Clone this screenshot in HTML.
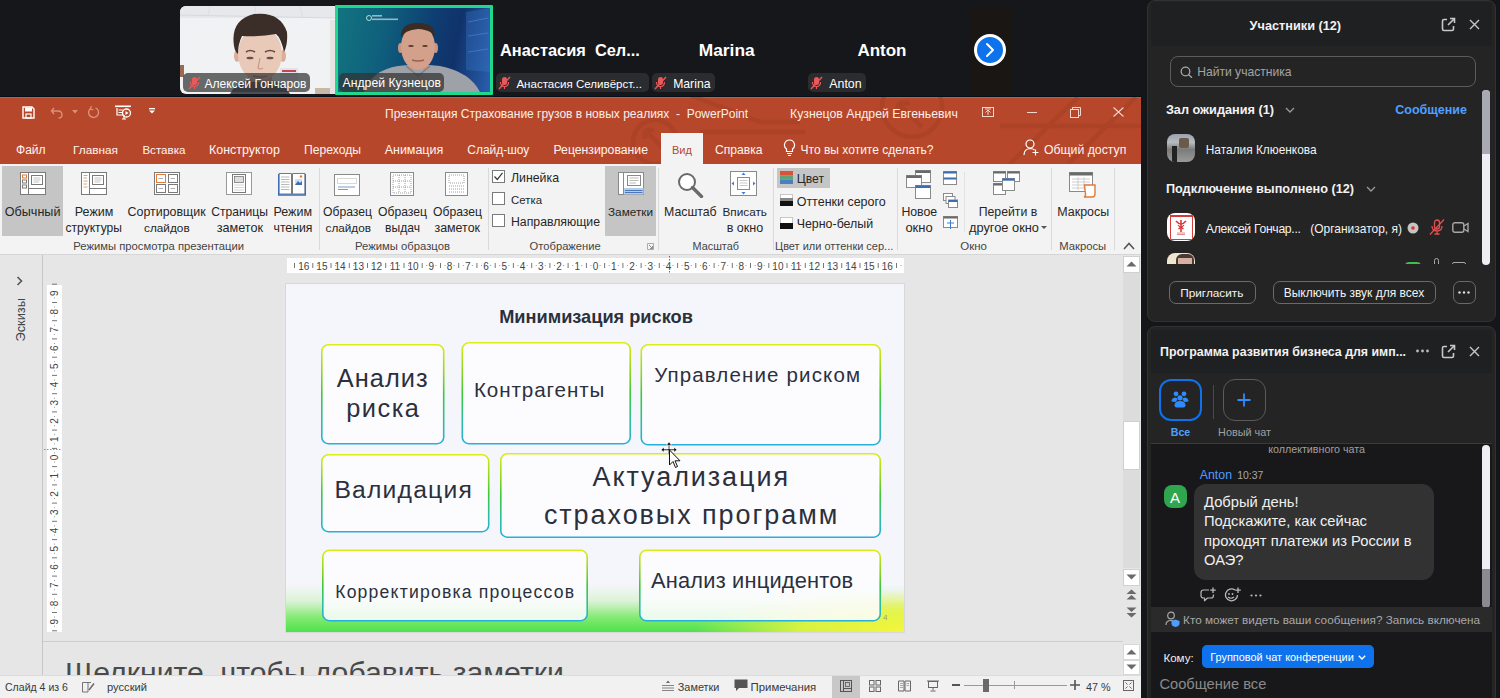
<!DOCTYPE html>
<html><head><meta charset="utf-8">
<style>
*{margin:0;padding:0;box-sizing:border-box}
body{width:1500px;height:698px;overflow:hidden;background:#15161a;font-family:"Liberation Sans",sans-serif;position:relative}
.a{position:absolute}
.w{white-space:nowrap}
</style></head><body>
<!-- ============ TOP VIDEO BAR ============ -->
<div class="a" style="left:0;top:0;width:1141px;height:97px;background:#16171b"></div>
<!-- video 1 -->
<div class="a" style="left:180px;top:6px;width:155px;height:88px;border-radius:6px 0 0 6px;overflow:hidden;background:#f1f2f4">
  <svg class="a" style="left:0;top:0" width="155" height="88" viewBox="0 0 155 88">
    <rect x="0" y="0" width="155" height="12" fill="#e6e8ec"/>
    <line x1="0" y1="9" x2="155" y2="12" stroke="#cfd3d8" stroke-width="0.7"/>
    <line x1="30" y1="0" x2="28" y2="10" stroke="#d6d9dd" stroke-width="0.6"/>
    <line x1="75" y1="0" x2="76" y2="11" stroke="#d6d9dd" stroke-width="0.6"/>
    <line x1="120" y1="0" x2="123" y2="12" stroke="#d6d9dd" stroke-width="0.6"/>
    <rect x="150" y="14" width="5" height="74" fill="#e9e4e4"/>
    <rect x="0" y="59" width="4" height="12" fill="#9a6a55"/>
    <rect x="100" y="62" width="18" height="14" fill="#dfe3ee"/>
    <rect x="102" y="64" width="14" height="2" fill="#c44"/>
    <rect x="135" y="82" width="15" height="6" fill="#c9b8a8"/>
    <!-- neck/shirt -->
    <path d="M50 88 Q56 76 70 74 L90 74 Q104 76 110 88 Z" fill="#4a4f5c"/>
    <rect x="68" y="62" width="24" height="14" fill="#d9b09c"/>
    <!-- face -->
    <ellipse cx="57" cy="50" rx="3" ry="6" fill="#dcae98"/>
    <ellipse cx="103" cy="50" rx="3" ry="6" fill="#dcae98"/>
    <ellipse cx="80" cy="48" rx="22" ry="27" fill="#e9c9b7"/>
    <!-- hair -->
    <path d="M54 40 Q50 14 74 8 Q100 5 107 26 Q108 38 104 46 Q101 32 96 28 Q80 31 62 30 Q58 38 58 48 Q55 46 54 40 Z" fill="#3b2e28"/>
    <path d="M66 46 Q70 43 75 46 M85 46 Q90 43 95 46" stroke="#6b4a3e" stroke-width="1.6" fill="none"/>
    <ellipse cx="70" cy="52" rx="3.5" ry="1.3" fill="#6b5048"/>
    <ellipse cx="90" cy="52" rx="3.5" ry="1.3" fill="#6b5048"/>
    <path d="M80 52 L78 62 Q80 64 83 62" stroke="#c99a86" stroke-width="1.2" fill="none"/>
    <path d="M73 70 Q80 72 87 70" stroke="#b88070" stroke-width="1.4" fill="none"/>
  </svg>
  <div class="a" style="left:3px;top:67px;width:127px;height:19px;border-radius:5px;background:rgba(50,50,50,.72)"></div>
  <svg class="a" style="left:8px;top:70px" width="13" height="14" viewBox="0 0 13 14"><rect x="4" y="1" width="5" height="8" rx="2.5" fill="#e85a5a"/><path d="M2.5 6 Q2.5 10.5 6.5 10.5 Q10.5 10.5 10.5 6" stroke="#e85a5a" stroke-width="1.2" fill="none"/><line x1="6.5" y1="10.5" x2="6.5" y2="13" stroke="#e85a5a" stroke-width="1.2"/><line x1="1" y1="13" x2="12" y2="1" stroke="#e85a5a" stroke-width="1.4"/></svg>
  </div>
<!-- video 2 -->
<div class="a" style="left:335px;top:5px;width:158px;height:90px;background:#1ed88e;border-radius:1px"></div>
<div class="a" style="left:338px;top:8px;width:152px;height:84px;overflow:hidden;background:linear-gradient(100deg,#127480 0%,#0f5f7c 30%,#0e3f72 58%,#10326a 75%,#2a5fb0 100%)">
  <svg class="a" style="left:0;top:0" width="152" height="84" viewBox="0 0 152 84">
    <circle cx="31" cy="10" r="2.5" fill="none" stroke="#cfe" stroke-width="0.8"/>
    <rect x="34" y="7" width="10" height="1.6" fill="#bcd" opacity=".8"/>
    <rect x="34" y="10.5" width="26" height="1.6" fill="#bcd" opacity=".8"/>
    <path d="M128 4 L152 0 L152 64 L128 62 Z" fill="#3a78c8" opacity=".35"/>
    <path d="M130 14 L150 10 M130 28 L150 25 M130 44 L150 41" stroke="#6aa0e0" stroke-width="1" opacity=".4"/>
    <path d="M26 84 Q34 62 60 58 Q80 55 102 58 Q132 64 142 84 Z" fill="#9fa1a8"/>
    <path d="M68 58 L80 68 L92 58" fill="none" stroke="#7f8188" stroke-width="1.5"/>
    <rect x="71" y="50" width="18" height="11" fill="#b8887a"/>
    <ellipse cx="62.5" cy="40" rx="2.5" ry="5" fill="#c99583"/>
    <ellipse cx="97.5" cy="40" rx="2.5" ry="5" fill="#c99583"/>
    <ellipse cx="80" cy="39" rx="17" ry="23" fill="#d3a08c"/>
    <path d="M63 30 Q62 15 80 15 Q98 15 97 30 Q95 22 80 21 Q66 22 63 30 Z" fill="#3a2b24"/>
    <ellipse cx="73" cy="38" rx="2.8" ry="1.1" fill="#5a3a30"/>
    <ellipse cx="87" cy="38" rx="2.8" ry="1.1" fill="#5a3a30"/>
    <path d="M74 52 Q80 54 86 52" stroke="#9a6050" stroke-width="1.5" fill="none"/>
  </svg>
  <div class="a" style="left:1px;top:65px;width:105px;height:19px;border-radius:5px;background:rgba(50,50,50,.72)"></div>
  </div>
<!-- name tiles -->
<div class="a" style="left:496px;top:73px;width:153px;height:19px;border-radius:5px;background:#2b2c2f"></div>
<div class="a" style="left:652px;top:73px;width:63px;height:19px;border-radius:5px;background:#2b2c2f"></div>
<div class="a" style="left:808px;top:73px;width:58px;height:19px;border-radius:5px;background:#2b2c2f"></div>
<svg class="a" style="left:498px;top:76px" width="13" height="14" viewBox="0 0 13 14"><rect x="4" y="1" width="5" height="8" rx="2.5" fill="#e85a5a"/><path d="M2.5 6 Q2.5 10.5 6.5 10.5 Q10.5 10.5 10.5 6" stroke="#e85a5a" stroke-width="1.2" fill="none"/><line x1="6.5" y1="10.5" x2="6.5" y2="13" stroke="#e85a5a" stroke-width="1.2"/><line x1="1" y1="13" x2="12" y2="1" stroke="#e85a5a" stroke-width="1.4"/></svg>
<svg class="a" style="left:654px;top:76px" width="13" height="14" viewBox="0 0 13 14"><rect x="4" y="1" width="5" height="8" rx="2.5" fill="#e85a5a"/><path d="M2.5 6 Q2.5 10.5 6.5 10.5 Q10.5 10.5 10.5 6" stroke="#e85a5a" stroke-width="1.2" fill="none"/><line x1="6.5" y1="10.5" x2="6.5" y2="13" stroke="#e85a5a" stroke-width="1.2"/><line x1="1" y1="13" x2="12" y2="1" stroke="#e85a5a" stroke-width="1.4"/></svg>
<svg class="a" style="left:810px;top:76px" width="13" height="14" viewBox="0 0 13 14"><rect x="4" y="1" width="5" height="8" rx="2.5" fill="#e85a5a"/><path d="M2.5 6 Q2.5 10.5 6.5 10.5 Q10.5 10.5 10.5 6" stroke="#e85a5a" stroke-width="1.2" fill="none"/><line x1="6.5" y1="10.5" x2="6.5" y2="13" stroke="#e85a5a" stroke-width="1.2"/><line x1="1" y1="13" x2="12" y2="1" stroke="#e85a5a" stroke-width="1.4"/></svg>
<div class="a" style="left:969px;top:8px;width:43px;height:87px;background:#1a1614"></div>
<div class="a" style="left:974px;top:34px;width:32px;height:32px;border-radius:50%;background:#0e72ed;border:3px solid #fff"></div>
<svg class="a" style="left:983px;top:42px" width="14" height="16" viewBox="0 0 14 16"><path d="M4 2 L10 8 L4 14" stroke="#fff" stroke-width="2" fill="none" stroke-linecap="round" stroke-linejoin="round"/></svg>


<div class="a w" style="left:204.4px;top:74.7px;font-size:12.07px;line-height:18px;color:#ffffff">Алексей Гончаров</div>
<div class="a w" style="left:342.6px;top:74.4px;font-size:12.22px;line-height:18px;color:#ffffff">Андрей Кузнецов</div>
<div class="a w" style="left:500.0px;top:38.0px;font-size:16.39px;line-height:24px;color:#ffffff;font-weight:bold;white-space:pre">Анастасия  Сел...</div>
<div class="a w" style="left:698.8px;top:38.0px;font-size:17.34px;line-height:25px;color:#ffffff;font-weight:bold">Marina</div>
<div class="a w" style="left:857.4px;top:38.0px;font-size:17.00px;line-height:25px;color:#ffffff;font-weight:bold">Anton</div>
<div class="a w" style="left:516.4px;top:74.6px;font-size:11.56px;line-height:18px;color:#ffffff">Анастасия Селивёрст...</div>
<div class="a w" style="left:673.2px;top:74.6px;font-size:12.20px;line-height:18px;color:#ffffff">Marina</div>
<div class="a w" style="left:829.3px;top:74.6px;font-size:12.36px;line-height:19px;color:#ffffff">Anton</div>
<!-- ============ POWERPOINT ============ -->
<div class="a" style="left:0px;top:97px;width:1141px;height:67px;background:#b7472a"></div>
<div class="a" style="left:0px;top:96px;width:1141px;height:1px;background:#03101a"></div>
<div class="a" style="left:0px;top:97px;width:1141px;height:1px;background:#dc5434"></div>
<svg class="a" style="left:0px;top:97px" width="1141" height="67" viewBox="0 0 1141 67">
<g stroke="#a63f25" stroke-width="4.5" fill="none" opacity="0.6">
<circle cx="912" cy="10" r="30"/>
<path d="M922 30 L898 6 M898 6 V18 M898 6 H910"/>
<circle cx="655" cy="45" r="22"/>
<path d="M668 56 L645 33 M645 33 V42 M645 33 H654"/>
<path d="M700 35 H805"/>
<path d="M690 -2 L760 25 L800 25"/>
<path d="M1000 29 H1141"/>
<path d="M1010 67 L1078 0 M1068 67 L1136 0"/>
</g></svg>
<svg class="a" style="left:22px;top:106px" width="13" height="13" viewBox="0 0 13 13"><path d="M1 1 H10 L12 3 V12 H1 Z" fill="none" stroke="#fff" stroke-width="1.4"/><rect x="3" y="1.5" width="7" height="4" fill="#fff"/><rect x="4" y="8" width="5" height="4" fill="none" stroke="#fff" stroke-width="1.2"/></svg>
<svg class="a" style="left:50px;top:106px" width="14" height="13" viewBox="0 0 14 13"><path d="M4 2 L1.5 5 L4 8 M1.5 5 H8 Q12 5 12 9 Q12 12 8.5 12" fill="none" stroke="#d9917c" stroke-width="1.4"/></svg>
<svg class="a" style="left:72px;top:110px" width="6" height="4" viewBox="0 0 6 4"><path d="M0 0 H6 L3 3.5 Z" fill="#d9917c"/></svg>
<svg class="a" style="left:87px;top:106px" width="13" height="13" viewBox="0 0 13 13"><path d="M8.5 1.8 A5 5 0 1 1 3.5 2.5" fill="none" stroke="#d9917c" stroke-width="1.4"/><path d="M4.5 0 L3.3 3 L6.5 4" fill="none" stroke="#d9917c" stroke-width="1.3"/></svg>
<svg class="a" style="left:115px;top:105px" width="17" height="15" viewBox="0 0 17 15"><rect x="0" y="0.5" width="16" height="1.6" fill="#fff"/><path d="M2 3 V10 H9" fill="none" stroke="#fff" stroke-width="1.2"/><path d="M3.5 5 H8 M3.5 7.5 H7" stroke="#fff" stroke-width="1"/><circle cx="11.5" cy="8" r="4" fill="none" stroke="#fff" stroke-width="1.3"/><path d="M10.5 6 L13.5 8 L10.5 10Z" fill="#fff"/><path d="M7 14 H11 M9 10 V14" stroke="#fff" stroke-width="1.2"/></svg>
<svg class="a" style="left:149px;top:108px" width="6" height="6" viewBox="0 0 6 6"><rect x="0" y="0" width="6" height="1.3" fill="#fff"/><path d="M0 2.5 H6 L3 5.5Z" fill="#fff"/></svg>
<div class="a w" style="left:385.0px;top:105.0px;font-size:12.00px;line-height:18px;color:#fbeee9;white-space:pre">Презентация Страхование грузов в новых реалиях  -  PowerPoint</div>
<div class="a w" style="left:790.0px;top:105.0px;font-size:12.29px;line-height:18px;color:#fbeee9">Кузнецов Андрей Евгеньевич</div>
<svg class="a" style="left:982px;top:107px" width="12" height="10" viewBox="0 0 12 10"><rect x="0.5" y="0.5" width="11" height="9" fill="none" stroke="#f3d6cd" stroke-width="1"/><path d="M3.5 5.5 L6 3 L8.5 5.5 M6 3 V8 M3 2 H9" fill="none" stroke="#f3d6cd" stroke-width="1"/></svg>
<div class="a" style="left:1027px;top:112px;width:10px;height:1px;background:#f3d6cd"></div>
<svg class="a" style="left:1070px;top:107px" width="11" height="11" viewBox="0 0 11 11"><rect x="0.5" y="2.5" width="8" height="8" fill="none" stroke="#f3d6cd" stroke-width="1"/><path d="M2.5 2.5 V0.5 H10.5 V8.5 H8.5" fill="none" stroke="#f3d6cd" stroke-width="1"/></svg>
<svg class="a" style="left:1113px;top:107px" width="11" height="10" viewBox="0 0 11 10"><path d="M0.5 0.5 L10.5 9.5 M10.5 0.5 L0.5 9.5" stroke="#f3d6cd" stroke-width="1.1"/></svg>
<div class="a w" style="left:16.0px;top:141.0px;font-size:12.04px;line-height:18px;color:#fff4f0">Файл</div>
<div class="a w" style="left:73.0px;top:141.0px;font-size:11.82px;line-height:18px;color:#fff4f0">Главная</div>
<div class="a w" style="left:142.4px;top:141.0px;font-size:11.60px;line-height:18px;color:#fff4f0">Вставка</div>
<div class="a w" style="left:209.0px;top:141.0px;font-size:12.45px;line-height:19px;color:#fff4f0">Конструктор</div>
<div class="a w" style="left:304.0px;top:141.0px;font-size:12.15px;line-height:18px;color:#fff4f0">Переходы</div>
<div class="a w" style="left:384.7px;top:141.0px;font-size:12.48px;line-height:19px;color:#fff4f0">Анимация</div>
<div class="a w" style="left:467.3px;top:141.0px;font-size:11.94px;line-height:18px;color:#fff4f0">Слайд-шоу</div>
<div class="a w" style="left:553.5px;top:141.0px;font-size:12.24px;line-height:18px;color:#fff4f0">Рецензирование</div>
<div class="a w" style="left:715.0px;top:141.0px;font-size:12.11px;line-height:18px;color:#fff4f0">Справка</div>
<div class="a" style="left:661px;top:133px;width:42px;height:31px;background:#f3f3f3"></div>
<div class="a w" style="left:672.0px;top:142.0px;font-size:11.05px;line-height:17px;color:#b7472a">Вид</div>
<svg class="a" style="left:783px;top:139px" width="13" height="18" viewBox="0 0 13 18"><path d="M6.5 1 A5 5 0 0 0 3.5 10 V12.5 H9.5 V10 A5 5 0 0 0 6.5 1Z" fill="none" stroke="#fff" stroke-width="1.2"/><path d="M4 14.5 H9 M5 16.5 H8" stroke="#fff" stroke-width="1.2"/></svg>
<div class="a w" style="left:800.6px;top:141.0px;font-size:12.02px;line-height:18px;color:#fff4f0">Что вы хотите сделать?</div>
<svg class="a" style="left:1023px;top:139px" width="16" height="17" viewBox="0 0 16 17"><circle cx="7" cy="5" r="4" fill="none" stroke="#fff" stroke-width="1.2"/><path d="M1 16 Q1 10 7 9.5 Q10 9.5 11.5 11" fill="none" stroke="#fff" stroke-width="1.2"/><path d="M12.5 10.5 V16.5 M9.5 13.5 H15.5" stroke="#fff" stroke-width="1.2"/></svg>
<div class="a w" style="left:1044.0px;top:141.0px;font-size:12.25px;line-height:18px;color:#fff4f0">Общий доступ</div>
<div class="a" style="left:0px;top:164px;width:1141px;height:90px;background:#f3f3f3"></div>
<div class="a" style="left:0px;top:254px;width:1141px;height:1px;background:#d6d6d6"></div>
<div class="a" style="left:2px;top:166px;width:61px;height:70px;background:#c5c5c5"></div>
<div class="a" style="left:605px;top:166px;width:51px;height:70px;background:#c5c5c5"></div>
<div class="a" style="left:777px;top:168px;width:53px;height:20px;background:#c5c5c5"></div>
<div class="a" style="left:319px;top:168px;width:1px;height:82px;background:#dadada"></div>
<div class="a" style="left:488px;top:168px;width:1px;height:82px;background:#dadada"></div>
<div class="a" style="left:658px;top:168px;width:1px;height:82px;background:#dadada"></div>
<div class="a" style="left:773px;top:168px;width:1px;height:82px;background:#dadada"></div>
<div class="a" style="left:897px;top:168px;width:1px;height:82px;background:#dadada"></div>
<div class="a" style="left:1051px;top:168px;width:1px;height:82px;background:#dadada"></div>
<div class="a" style="left:1114px;top:168px;width:1px;height:82px;background:#dadada"></div>
<div class="a" style="left:964px;top:172px;width:1px;height:60px;background:#e2e2e2"></div>
<svg class="a" style="left:20px;top:172px" width="26" height="24" viewBox="0 0 26 24"><rect x="0.5" y="0.5" width="25" height="22" fill="#ffffff" stroke="#7a7a7a" stroke-width="1"/><path d="M8.5 0.5 V22.5 M8.5 16.5 H25.5" stroke="#7a7a7a" stroke-width="1"/><rect x="2.5" y="3" width="4" height="3" fill="none" stroke="#e07b39" stroke-width="1"/><rect x="2.5" y="8" width="4" height="3" fill="none" stroke="#7a7a7a" stroke-width="1"/><rect x="2.5" y="13" width="4" height="3" fill="none" stroke="#7a7a7a" stroke-width="1"/><rect x="11.5" y="3.5" width="11" height="9" fill="none" stroke="#7a7a7a" stroke-width="1"/><path d="M13.5 6 H20.5 M13.5 8 H20.5 M13.5 10 H19" stroke="#b5b5b5" stroke-width="0.8"/></svg>
<svg class="a" style="left:81px;top:172px" width="26" height="24" viewBox="0 0 26 24"><rect x="0.5" y="0.5" width="25" height="22" fill="#ffffff" stroke="#7a7a7a" stroke-width="1"/><path d="M8.5 0.5 V22.5 M8.5 16.5 H25.5" stroke="#7a7a7a" stroke-width="1"/><path d="M2.5 3.5 H6.5 M2.5 6 H6 M2.5 9 H6.5 M2.5 12 H6 M2.5 15 H6.5" stroke="#c7a88f" stroke-width="1"/><rect x="11.5" y="3.5" width="11" height="9" fill="none" stroke="#7a7a7a" stroke-width="1"/><path d="M13.5 6 H20.5 M13.5 8 H20.5 M13.5 10 H19" stroke="#b5b5b5" stroke-width="0.8"/></svg>
<svg class="a" style="left:154px;top:172px" width="26" height="24" viewBox="0 0 26 24"><rect x="0.5" y="0.5" width="25" height="22" fill="#ffffff" stroke="#7a7a7a" stroke-width="1"/><rect x="2.5" y="2.5" width="9" height="8" fill="none" stroke="#e07b39" stroke-width="1"/><rect x="14.5" y="2.5" width="9" height="8" fill="none" stroke="#7a7a7a" stroke-width="1"/><rect x="2.5" y="12.5" width="9" height="8" fill="none" stroke="#7a7a7a" stroke-width="1"/><rect x="14.5" y="12.5" width="9" height="8" fill="none" stroke="#7a7a7a" stroke-width="1"/><path d="M4.5 6.5 H9 M16.5 6.5 H21 M4.5 16.5 H9 M16.5 16.5 H21" stroke="#999" stroke-width="0.8"/></svg>
<svg class="a" style="left:226px;top:172px" width="26" height="24" viewBox="0 0 26 24"><rect x="0.5" y="0.5" width="25" height="22" fill="#ffffff" stroke="#9a9a9a" stroke-width="1"/><rect x="6.5" y="2.5" width="13" height="18" fill="none" stroke="#7a7a7a" stroke-width="1"/><rect x="8.5" y="4.5" width="9" height="6" fill="#dedede" stroke="#7a7a7a" stroke-width="0.8"/><path d="M8.5 13 H17.5 M8.5 15.5 H17.5 M8.5 18 H17.5" stroke="#999" stroke-dasharray="1 1" stroke-width="0.8"/></svg>
<svg class="a" style="left:278px;top:172px" width="28" height="24" viewBox="0 0 28 24"><path d="M1 1.5 H13.5 V22 H1 Z M14.5 1.5 H27 V22 H14.5Z" fill="#ffffff" stroke="#7a7a7a" stroke-width="1"/><path d="M0.5 2 V23 H27.5 V2" fill="none" stroke="#3e6db5" stroke-width="1.6"/><path d="M3 5 H11.5 M3 7.5 H11.5 M3 10 H11.5 M3 12.5 H11.5 M3 15 H11.5 M3 17.5 H11.5" stroke="#aaa" stroke-width="0.8"/><rect x="17" y="7" width="7" height="6" fill="#cfe0f3"/><path d="M17 13 L20 9 L22 11 L24 9 V13Z" fill="#3e6db5"/><circle cx="23" cy="4.5" r="1.2" fill="#e07b39"/></svg>
<div class="a w" style="left:4.8px;top:203.0px;font-size:12.60px;line-height:19px;color:#262626">Обычный</div>
<div class="a w" style="left:74.8px;top:203.0px;font-size:12.49px;line-height:19px;color:#262626">Режим</div>
<div class="a w" style="left:65.6px;top:219.0px;font-size:12.04px;line-height:18px;color:#262626">структуры</div>
<div class="a w" style="left:127.6px;top:203.0px;font-size:12.41px;line-height:19px;color:#262626">Сортировщик</div>
<div class="a w" style="left:144.0px;top:219.0px;font-size:11.81px;line-height:18px;color:#262626">слайдов</div>
<div class="a w" style="left:211.2px;top:203.0px;font-size:12.10px;line-height:18px;color:#262626">Страницы</div>
<div class="a w" style="left:216.7px;top:219.0px;font-size:12.63px;line-height:19px;color:#262626">заметок</div>
<div class="a w" style="left:273.5px;top:203.0px;font-size:12.49px;line-height:19px;color:#262626">Режим</div>
<div class="a w" style="left:273.5px;top:219.0px;font-size:12.25px;line-height:18px;color:#262626">чтения</div>
<div class="a w" style="left:73.3px;top:238.0px;font-size:11.26px;line-height:17px;color:#444444">Режимы просмотра презентации</div>
<svg class="a" style="left:334px;top:174px" width="27" height="23" viewBox="0 0 27 23"><rect x="0.5" y="0.5" width="25" height="21" fill="#ffffff" stroke="#8a8a8a" stroke-width="1"/><rect x="3.5" y="4.5" width="19" height="5" fill="none" stroke="#999" stroke-dasharray="1 1" stroke-width="0.8"/><path d="M4 13 H21 M4 15.5 H14" stroke="#6a8fc9" stroke-width="0.9"/></svg>
<svg class="a" style="left:390px;top:172px" width="25" height="25" viewBox="0 0 25 25"><rect x="0.5" y="0.5" width="23" height="23" fill="#ffffff" stroke="#8a8a8a" stroke-width="1"/><path d="M3 3 H21 V21 H3Z M3 9 H21 M3 15 H21 M9 3 V21 M15 3 V21" fill="none" stroke="#888" stroke-dasharray="1 1" stroke-width="0.8"/></svg>
<svg class="a" style="left:445px;top:172px" width="24" height="25" viewBox="0 0 24 25"><rect x="0.5" y="0.5" width="22" height="23" fill="#ffffff" stroke="#8a8a8a" stroke-width="1"/><rect x="4" y="3" width="15" height="8" fill="none" stroke="#888" stroke-dasharray="1 1" stroke-width="0.8"/><path d="M4 14 H19 M4 17 H19 M4 20 H19" stroke="#888" stroke-dasharray="1 1" stroke-width="0.8"/></svg>
<div class="a w" style="left:323.0px;top:203.0px;font-size:12.17px;line-height:18px;color:#262626">Образец</div>
<div class="a w" style="left:325.5px;top:219.0px;font-size:11.76px;line-height:18px;color:#262626">слайдов</div>
<div class="a w" style="left:378.0px;top:203.0px;font-size:12.17px;line-height:18px;color:#262626">Образец</div>
<div class="a w" style="left:385.0px;top:219.0px;font-size:12.12px;line-height:18px;color:#262626">выдач</div>
<div class="a w" style="left:433.0px;top:203.0px;font-size:12.17px;line-height:18px;color:#262626">Образец</div>
<div class="a w" style="left:434.5px;top:219.0px;font-size:12.41px;line-height:19px;color:#262626">заметок</div>
<div class="a w" style="left:355.0px;top:238.0px;font-size:11.29px;line-height:17px;color:#444444">Режимы образцов</div>
<div class="a" style="left:492px;top:170px;width:13px;height:13px;background:#ffffff;border:1px solid #7a7a7a"></div>
<div class="a" style="left:492px;top:192px;width:13px;height:13px;background:#ffffff;border:1px solid #7a7a7a"></div>
<div class="a" style="left:492px;top:214px;width:13px;height:13px;background:#ffffff;border:1px solid #7a7a7a"></div>
<svg class="a" style="left:494px;top:172px" width="9" height="9" viewBox="0 0 9 9"><path d="M0.5 4.5 L3.3 7.5 L8.5 0.8" fill="none" stroke="#333" stroke-width="1.2"/></svg>
<div class="a w" style="left:511.0px;top:169.0px;font-size:12.32px;line-height:19px;color:#262626">Линейка</div>
<div class="a w" style="left:511.0px;top:192.0px;font-size:11.40px;line-height:17px;color:#262626">Сетка</div>
<div class="a w" style="left:511.0px;top:213.0px;font-size:12.27px;line-height:18px;color:#262626">Направляющие</div>
<svg class="a" style="left:618px;top:172px" width="26" height="23" viewBox="0 0 26 23"><rect x="0.5" y="0.5" width="25" height="22" fill="#ffffff" stroke="#8a8a8a" stroke-width="1"/><path d="M5.5 0.5 V22.5" stroke="#8a8a8a" stroke-width="1"/><rect x="9.5" y="3.5" width="13" height="10" fill="none" stroke="#8a8a8a" stroke-width="1"/><path d="M11.5 6 H20.5 M11.5 8.5 H20.5 M11.5 11 H18" stroke="#aaa" stroke-width="0.8"/><rect x="6" y="16" width="19.5" height="6.5" fill="#b7cce8"/><path d="M7 18.5 H24.5 M7 20.5 H24.5" stroke="#3e6db5" stroke-width="0.9"/></svg>
<div class="a w" style="left:608.0px;top:203.0px;font-size:11.77px;line-height:18px;color:#262626">Заметки</div>
<div class="a w" style="left:529.6px;top:238.0px;font-size:11.20px;line-height:17px;color:#444444">Отображение</div>
<svg class="a" style="left:647px;top:243px" width="7" height="7" viewBox="0 0 7 7"><path d="M0.5 0.5 H6.5 V6.5 H0.5Z" fill="none" stroke="#999" stroke-width="0.8"/><path d="M2 2 L5.5 5.5 M5.5 3 V5.5 H3" fill="none" stroke="#777" stroke-width="0.8"/></svg>
<svg class="a" style="left:677px;top:172px" width="27" height="26" viewBox="0 0 27 26"><circle cx="10" cy="10" r="8" fill="#fff" stroke="#6a6a6a" stroke-width="2"/><path d="M15.5 15.5 L24.5 24.5" stroke="#6a6a6a" stroke-width="3.4" stroke-linecap="round"/></svg>
<svg class="a" style="left:730px;top:171px" width="27" height="26" viewBox="0 0 27 26"><rect x="0.5" y="0.5" width="26" height="24" fill="#fff" stroke="#8a8a8a" stroke-width="1"/><rect x="7.5" y="6.5" width="12" height="12" fill="#fff" stroke="#8a8a8a" stroke-width="1"/><path d="M9.5 9.5 H17.5 M9.5 12 H17.5 M9.5 14.5 H17.5" stroke="#bbb" stroke-width="0.8"/><path d="M13.5 1.5 L11.5 4 H15.5Z M13.5 23.5 L11.5 21 H15.5Z M1.5 12.5 L4 10.5 V14.5Z M25.5 12.5 L23 10.5 V14.5Z" fill="#3e7bd0"/></svg>
<div class="a w" style="left:664.0px;top:203.0px;font-size:12.32px;line-height:19px;color:#262626">Масштаб</div>
<div class="a w" style="left:722.5px;top:203.0px;font-size:11.77px;line-height:18px;color:#262626">Вписать</div>
<div class="a w" style="left:726.7px;top:219.0px;font-size:12.57px;line-height:19px;color:#262626">в окно</div>
<div class="a w" style="left:692.5px;top:238.0px;font-size:10.87px;line-height:17px;color:#444444">Масштаб</div>
<svg class="a" style="left:780px;top:171px" width="13" height="13" viewBox="0 0 13 13"><rect x="0" y="0" width="13" height="4.3" fill="#d9533a"/><rect x="0" y="4.3" width="13" height="4.3" fill="#5fa27a"/><rect x="0" y="8.6" width="13" height="4.4" fill="#4a7fc0"/></svg>
<svg class="a" style="left:780px;top:194px" width="13" height="12" viewBox="0 0 13 12"><rect x="0.5" y="0.5" width="12" height="11" fill="#fff" stroke="#bbb" stroke-width="0.8"/><rect x="0" y="4" width="13" height="3" fill="#888"/><rect x="0" y="7" width="13" height="5" fill="#111"/></svg>
<svg class="a" style="left:780px;top:217px" width="13" height="12" viewBox="0 0 13 12"><rect x="0.5" y="0.5" width="12" height="11" fill="#fff" stroke="#bbb" stroke-width="0.8"/><rect x="0" y="6" width="13" height="6" fill="#111"/></svg>
<div class="a w" style="left:796.7px;top:170.0px;font-size:12.18px;line-height:18px;color:#262626">Цвет</div>
<div class="a w" style="left:796.7px;top:192.7px;font-size:12.49px;line-height:19px;color:#262626">Оттенки серого</div>
<div class="a w" style="left:796.7px;top:215.0px;font-size:12.42px;line-height:19px;color:#262626">Черно-белый</div>
<div class="a w" style="left:775.0px;top:238.0px;font-size:10.99px;line-height:17px;color:#444444">Цвет или оттенки сер...</div>
<svg class="a" style="left:906px;top:170px" width="26" height="29" viewBox="0 0 26 29"><rect x="9.5" y="0.5" width="15" height="12" fill="#fff" stroke="#8a8a8a" stroke-width="1"/><rect x="9.5" y="0.5" width="15" height="2.5" fill="#6a6a6a"/><rect x="0.5" y="5.5" width="15" height="12" fill="#fff" stroke="#8a8a8a" stroke-width="1"/><rect x="0.5" y="5.5" width="15" height="2.5" fill="#6a6a6a"/><rect x="9.5" y="15.5" width="15" height="13" fill="#fff" stroke="#8a8a8a" stroke-width="1"/><rect x="9.5" y="15.5" width="15" height="2.5" fill="#3e6db5"/></svg>
<svg class="a" style="left:943px;top:171px" width="14" height="14" viewBox="0 0 14 14"><rect x="0.5" y="0.5" width="13" height="13" fill="#fff" stroke="#8a8a8a" stroke-width="1"/><rect x="0.5" y="0.5" width="13" height="2" fill="#3e6db5"/><rect x="0.5" y="6.5" width="13" height="2" fill="#3e6db5"/></svg>
<svg class="a" style="left:943px;top:193px" width="15" height="15" viewBox="0 0 15 15"><rect x="0.5" y="0.5" width="9" height="7" fill="#fff" stroke="#8a8a8a" stroke-width="1"/><rect x="3" y="3.5" width="9" height="7" fill="#fff" stroke="#8a8a8a" stroke-width="1"/><rect x="5.5" y="7" width="9" height="7.5" fill="#fff" stroke="#8a8a8a" stroke-width="1"/><rect x="5.5" y="7" width="9" height="2" fill="#3e6db5"/></svg>
<svg class="a" style="left:943px;top:216px" width="15" height="14" viewBox="0 0 15 14"><rect x="0.5" y="0.5" width="14" height="11" fill="#fff" stroke="#8a8a8a" stroke-width="1"/><rect x="0.5" y="0.5" width="14" height="2" fill="#6a6a6a"/><path d="M4 7 H11 M7.5 4 V13" stroke="#3e7bd0" stroke-width="1"/></svg>
<div class="a w" style="left:901.4px;top:203.0px;font-size:12.30px;line-height:18px;color:#262626">Новое</div>
<div class="a w" style="left:905.4px;top:218.0px;font-size:12.99px;line-height:19px;color:#262626">окно</div>
<svg class="a" style="left:993px;top:171px" width="28" height="25" viewBox="0 0 28 25"><rect x="0.5" y="0.5" width="12" height="10" fill="#fff" stroke="#8a8a8a" stroke-width="1"/><rect x="0.5" y="0.5" width="12" height="2" fill="#6a6a6a"/><rect x="14.5" y="0.5" width="12" height="10" fill="#fff" stroke="#8a8a8a" stroke-width="1"/><rect x="14.5" y="0.5" width="12" height="2" fill="#6a6a6a"/><rect x="0.5" y="12.5" width="12" height="11" fill="#fff" stroke="#8a8a8a" stroke-width="1"/><rect x="0.5" y="12.5" width="12" height="2" fill="#6a6a6a"/><rect x="9.5" y="7.5" width="12" height="12" fill="#fff" stroke="#8a8a8a" stroke-width="1"/><rect x="9.5" y="7.5" width="12" height="2.2" fill="#3e6db5"/></svg>
<div class="a w" style="left:978.7px;top:203.0px;font-size:12.28px;line-height:18px;color:#262626">Перейти в</div>
<div class="a w" style="left:969.0px;top:218.0px;font-size:12.81px;line-height:19px;color:#262626">другое окно</div>
<svg class="a" style="left:1041px;top:226px" width="6" height="4" viewBox="0 0 6 4"><path d="M0 0 H6 L3 3Z" fill="#555"/></svg>
<div class="a w" style="left:960.3px;top:238.0px;font-size:11.49px;line-height:17px;color:#444444">Окно</div>
<svg class="a" style="left:1069px;top:172px" width="28" height="26" viewBox="0 0 28 26"><rect x="0.5" y="0.5" width="23" height="19" fill="#fff" stroke="#8a8a8a" stroke-width="1"/><rect x="0.5" y="0.5" width="23" height="3" fill="#6a6a6a"/><path d="M3 7 H21 M3 10 H21 M3 13 H21 M3 16 H21 M9 5 V18 M15 5 V18" stroke="#c8c8c8" stroke-width="0.9"/><path d="M15.5 13 H26 V22 Q26 25 23 25 H15 Q17 24 16.5 22 Z" fill="#fff" stroke="#e07b39" stroke-width="1.4"/></svg>
<div class="a w" style="left:1057.3px;top:203.0px;font-size:12.45px;line-height:19px;color:#262626">Макросы</div>
<div class="a w" style="left:1059.3px;top:238.0px;font-size:11.25px;line-height:17px;color:#444444">Макросы</div>
<svg class="a" style="left:1123px;top:242px" width="12" height="8" viewBox="0 0 12 8"><path d="M1 7 L6 1.5 L11 7" fill="none" stroke="#555" stroke-width="1.6"/></svg>
<div class="a" style="left:0px;top:255px;width:1141px;height:420px;background:#e6e6e6"></div>
<div class="a" style="left:42px;top:255px;width:1px;height:420px;background:#c6c6c6"></div>
<svg class="a" style="left:16px;top:276px" width="8" height="10" viewBox="0 0 8 10"><path d="M1.5 1 L5.5 5 L1.5 9" fill="none" stroke="#555" stroke-width="1.6"/></svg>
<div class="a w" style="left:0px;top:314px;width:41px;height:14px;line-height:14px;font-size:12.8px;color:#444;transform:translate(0px,0px) rotate(-90deg);transform-origin:20.5px 7px;text-align:center">Эскизы</div>
<div class="a" style="left:287px;top:258px;width:617px;height:15px;background:#ffffff"></div>
<svg class="a" style="left:0px;top:0px;pointer-events:none" width="1141" height="698" viewBox="0 0 1141 698"><text x="303.7" y="270" text-anchor="middle" font-size="10" fill="#444" font-family="Liberation Sans">16</text><rect x="312.3" y="263" width="1" height="5" fill="#777"/><rect x="307.7" y="265" width="1" height="1" fill="#999"/><rect x="316.8" y="265" width="1" height="1" fill="#999"/><text x="321.9" y="270" text-anchor="middle" font-size="10" fill="#444" font-family="Liberation Sans">15</text><rect x="330.5" y="263" width="1" height="5" fill="#777"/><rect x="326.0" y="265" width="1" height="1" fill="#999"/><rect x="335.1" y="265" width="1" height="1" fill="#999"/><text x="340.1" y="270" text-anchor="middle" font-size="10" fill="#444" font-family="Liberation Sans">14</text><rect x="348.8" y="263" width="1" height="5" fill="#777"/><rect x="344.2" y="265" width="1" height="1" fill="#999"/><rect x="353.3" y="265" width="1" height="1" fill="#999"/><text x="358.4" y="270" text-anchor="middle" font-size="10" fill="#444" font-family="Liberation Sans">13</text><rect x="367.0" y="263" width="1" height="5" fill="#777"/><rect x="362.4" y="265" width="1" height="1" fill="#999"/><rect x="371.6" y="265" width="1" height="1" fill="#999"/><text x="376.6" y="270" text-anchor="middle" font-size="10" fill="#444" font-family="Liberation Sans">12</text><rect x="385.2" y="263" width="1" height="5" fill="#777"/><rect x="380.7" y="265" width="1" height="1" fill="#999"/><rect x="389.8" y="265" width="1" height="1" fill="#999"/><text x="394.9" y="270" text-anchor="middle" font-size="10" fill="#444" font-family="Liberation Sans">11</text><rect x="403.5" y="263" width="1" height="5" fill="#777"/><rect x="398.9" y="265" width="1" height="1" fill="#999"/><rect x="408.0" y="265" width="1" height="1" fill="#999"/><text x="413.1" y="270" text-anchor="middle" font-size="10" fill="#444" font-family="Liberation Sans">10</text><rect x="421.7" y="263" width="1" height="5" fill="#777"/><rect x="417.2" y="265" width="1" height="1" fill="#999"/><rect x="426.3" y="265" width="1" height="1" fill="#999"/><text x="431.3" y="270" text-anchor="middle" font-size="10" fill="#444" font-family="Liberation Sans">9</text><rect x="440.0" y="263" width="1" height="5" fill="#777"/><rect x="435.4" y="265" width="1" height="1" fill="#999"/><rect x="444.5" y="265" width="1" height="1" fill="#999"/><text x="449.6" y="270" text-anchor="middle" font-size="10" fill="#444" font-family="Liberation Sans">8</text><rect x="458.2" y="263" width="1" height="5" fill="#777"/><rect x="453.6" y="265" width="1" height="1" fill="#999"/><rect x="462.8" y="265" width="1" height="1" fill="#999"/><text x="467.8" y="270" text-anchor="middle" font-size="10" fill="#444" font-family="Liberation Sans">7</text><rect x="476.4" y="263" width="1" height="5" fill="#777"/><rect x="471.9" y="265" width="1" height="1" fill="#999"/><rect x="481.0" y="265" width="1" height="1" fill="#999"/><text x="486.1" y="270" text-anchor="middle" font-size="10" fill="#444" font-family="Liberation Sans">6</text><rect x="494.7" y="263" width="1" height="5" fill="#777"/><rect x="490.1" y="265" width="1" height="1" fill="#999"/><rect x="499.2" y="265" width="1" height="1" fill="#999"/><text x="504.3" y="270" text-anchor="middle" font-size="10" fill="#444" font-family="Liberation Sans">5</text><rect x="512.9" y="263" width="1" height="5" fill="#777"/><rect x="508.4" y="265" width="1" height="1" fill="#999"/><rect x="517.5" y="265" width="1" height="1" fill="#999"/><text x="522.5" y="270" text-anchor="middle" font-size="10" fill="#444" font-family="Liberation Sans">4</text><rect x="531.2" y="263" width="1" height="5" fill="#777"/><rect x="526.6" y="265" width="1" height="1" fill="#999"/><rect x="535.7" y="265" width="1" height="1" fill="#999"/><text x="540.8" y="270" text-anchor="middle" font-size="10" fill="#444" font-family="Liberation Sans">3</text><rect x="549.4" y="263" width="1" height="5" fill="#777"/><rect x="544.8" y="265" width="1" height="1" fill="#999"/><rect x="554.0" y="265" width="1" height="1" fill="#999"/><text x="559.0" y="270" text-anchor="middle" font-size="10" fill="#444" font-family="Liberation Sans">2</text><rect x="567.6" y="263" width="1" height="5" fill="#777"/><rect x="563.1" y="265" width="1" height="1" fill="#999"/><rect x="572.2" y="265" width="1" height="1" fill="#999"/><text x="577.3" y="270" text-anchor="middle" font-size="10" fill="#444" font-family="Liberation Sans">1</text><rect x="585.9" y="263" width="1" height="5" fill="#777"/><rect x="581.3" y="265" width="1" height="1" fill="#999"/><rect x="590.4" y="265" width="1" height="1" fill="#999"/><text x="595.5" y="270" text-anchor="middle" font-size="10" fill="#444" font-family="Liberation Sans">0</text><rect x="604.1" y="263" width="1" height="5" fill="#777"/><rect x="599.6" y="265" width="1" height="1" fill="#999"/><rect x="608.7" y="265" width="1" height="1" fill="#999"/><text x="613.7" y="270" text-anchor="middle" font-size="10" fill="#444" font-family="Liberation Sans">1</text><rect x="622.4" y="263" width="1" height="5" fill="#777"/><rect x="617.8" y="265" width="1" height="1" fill="#999"/><rect x="626.9" y="265" width="1" height="1" fill="#999"/><text x="632.0" y="270" text-anchor="middle" font-size="10" fill="#444" font-family="Liberation Sans">2</text><rect x="640.6" y="263" width="1" height="5" fill="#777"/><rect x="636.0" y="265" width="1" height="1" fill="#999"/><rect x="645.2" y="265" width="1" height="1" fill="#999"/><text x="650.2" y="270" text-anchor="middle" font-size="10" fill="#444" font-family="Liberation Sans">3</text><rect x="658.8" y="263" width="1" height="5" fill="#777"/><rect x="654.3" y="265" width="1" height="1" fill="#999"/><rect x="663.4" y="265" width="1" height="1" fill="#999"/><text x="668.5" y="270" text-anchor="middle" font-size="10" fill="#444" font-family="Liberation Sans">4</text><rect x="677.1" y="263" width="1" height="5" fill="#777"/><rect x="672.5" y="265" width="1" height="1" fill="#999"/><rect x="681.6" y="265" width="1" height="1" fill="#999"/><text x="686.7" y="270" text-anchor="middle" font-size="10" fill="#444" font-family="Liberation Sans">5</text><rect x="695.3" y="263" width="1" height="5" fill="#777"/><rect x="690.8" y="265" width="1" height="1" fill="#999"/><rect x="699.9" y="265" width="1" height="1" fill="#999"/><text x="704.9" y="270" text-anchor="middle" font-size="10" fill="#444" font-family="Liberation Sans">6</text><rect x="713.6" y="263" width="1" height="5" fill="#777"/><rect x="709.0" y="265" width="1" height="1" fill="#999"/><rect x="718.1" y="265" width="1" height="1" fill="#999"/><text x="723.2" y="270" text-anchor="middle" font-size="10" fill="#444" font-family="Liberation Sans">7</text><rect x="731.8" y="263" width="1" height="5" fill="#777"/><rect x="727.2" y="265" width="1" height="1" fill="#999"/><rect x="736.4" y="265" width="1" height="1" fill="#999"/><text x="741.4" y="270" text-anchor="middle" font-size="10" fill="#444" font-family="Liberation Sans">8</text><rect x="750.0" y="263" width="1" height="5" fill="#777"/><rect x="745.5" y="265" width="1" height="1" fill="#999"/><rect x="754.6" y="265" width="1" height="1" fill="#999"/><text x="759.7" y="270" text-anchor="middle" font-size="10" fill="#444" font-family="Liberation Sans">9</text><rect x="768.3" y="263" width="1" height="5" fill="#777"/><rect x="763.7" y="265" width="1" height="1" fill="#999"/><rect x="772.8" y="265" width="1" height="1" fill="#999"/><text x="777.9" y="270" text-anchor="middle" font-size="10" fill="#444" font-family="Liberation Sans">10</text><rect x="786.5" y="263" width="1" height="5" fill="#777"/><rect x="782.0" y="265" width="1" height="1" fill="#999"/><rect x="791.1" y="265" width="1" height="1" fill="#999"/><text x="796.1" y="270" text-anchor="middle" font-size="10" fill="#444" font-family="Liberation Sans">11</text><rect x="804.8" y="263" width="1" height="5" fill="#777"/><rect x="800.2" y="265" width="1" height="1" fill="#999"/><rect x="809.3" y="265" width="1" height="1" fill="#999"/><text x="814.4" y="270" text-anchor="middle" font-size="10" fill="#444" font-family="Liberation Sans">12</text><rect x="823.0" y="263" width="1" height="5" fill="#777"/><rect x="818.4" y="265" width="1" height="1" fill="#999"/><rect x="827.6" y="265" width="1" height="1" fill="#999"/><text x="832.6" y="270" text-anchor="middle" font-size="10" fill="#444" font-family="Liberation Sans">13</text><rect x="841.2" y="263" width="1" height="5" fill="#777"/><rect x="836.7" y="265" width="1" height="1" fill="#999"/><rect x="845.8" y="265" width="1" height="1" fill="#999"/><text x="850.9" y="270" text-anchor="middle" font-size="10" fill="#444" font-family="Liberation Sans">14</text><rect x="859.5" y="263" width="1" height="5" fill="#777"/><rect x="854.9" y="265" width="1" height="1" fill="#999"/><rect x="864.0" y="265" width="1" height="1" fill="#999"/><text x="869.1" y="270" text-anchor="middle" font-size="10" fill="#444" font-family="Liberation Sans">15</text><rect x="877.7" y="263" width="1" height="5" fill="#777"/><rect x="873.2" y="265" width="1" height="1" fill="#999"/><rect x="882.3" y="265" width="1" height="1" fill="#999"/><text x="887.3" y="270" text-anchor="middle" font-size="10" fill="#444" font-family="Liberation Sans">16</text><rect x="896.0" y="263" width="1" height="5" fill="#777"/><rect x="891.4" y="265" width="1" height="1" fill="#999"/><rect x="900.5" y="265" width="1" height="1" fill="#999"/><rect x="294.0" y="263" width="1" height="5" fill="#777"/><path d="M669.5 256 V274" stroke="#d04020" stroke-width="1" stroke-dasharray="1.5 1.5"/></svg>
<div class="a" style="left:47px;top:285px;width:15px;height:347px;background:#ffffff"></div>
<svg class="a" style="left:0px;top:0px" width="1141" height="698" viewBox="0 0 1141 698"><text transform="translate(58,293.3) rotate(-90)" x="0" y="0" text-anchor="middle" font-size="10" fill="#444" font-family="Liberation Sans">9</text><rect x="52" y="302.0" width="5" height="1" fill="#777"/><rect x="54" y="297.4" width="1" height="1" fill="#999"/><rect x="54" y="306.5" width="1" height="1" fill="#999"/><text transform="translate(58,311.6) rotate(-90)" x="0" y="0" text-anchor="middle" font-size="10" fill="#444" font-family="Liberation Sans">8</text><rect x="52" y="320.2" width="5" height="1" fill="#777"/><rect x="54" y="315.6" width="1" height="1" fill="#999"/><rect x="54" y="324.8" width="1" height="1" fill="#999"/><text transform="translate(58,329.8) rotate(-90)" x="0" y="0" text-anchor="middle" font-size="10" fill="#444" font-family="Liberation Sans">7</text><rect x="52" y="338.4" width="5" height="1" fill="#777"/><rect x="54" y="333.9" width="1" height="1" fill="#999"/><rect x="54" y="343.0" width="1" height="1" fill="#999"/><text transform="translate(58,348.1) rotate(-90)" x="0" y="0" text-anchor="middle" font-size="10" fill="#444" font-family="Liberation Sans">6</text><rect x="52" y="356.7" width="5" height="1" fill="#777"/><rect x="54" y="352.1" width="1" height="1" fill="#999"/><rect x="54" y="361.2" width="1" height="1" fill="#999"/><text transform="translate(58,366.3) rotate(-90)" x="0" y="0" text-anchor="middle" font-size="10" fill="#444" font-family="Liberation Sans">5</text><rect x="52" y="374.9" width="5" height="1" fill="#777"/><rect x="54" y="370.4" width="1" height="1" fill="#999"/><rect x="54" y="379.5" width="1" height="1" fill="#999"/><text transform="translate(58,384.5) rotate(-90)" x="0" y="0" text-anchor="middle" font-size="10" fill="#444" font-family="Liberation Sans">4</text><rect x="52" y="393.2" width="5" height="1" fill="#777"/><rect x="54" y="388.6" width="1" height="1" fill="#999"/><rect x="54" y="397.7" width="1" height="1" fill="#999"/><text transform="translate(58,402.8) rotate(-90)" x="0" y="0" text-anchor="middle" font-size="10" fill="#444" font-family="Liberation Sans">3</text><rect x="52" y="411.4" width="5" height="1" fill="#777"/><rect x="54" y="406.8" width="1" height="1" fill="#999"/><rect x="54" y="416.0" width="1" height="1" fill="#999"/><text transform="translate(58,421.0) rotate(-90)" x="0" y="0" text-anchor="middle" font-size="10" fill="#444" font-family="Liberation Sans">2</text><rect x="52" y="429.6" width="5" height="1" fill="#777"/><rect x="54" y="425.1" width="1" height="1" fill="#999"/><rect x="54" y="434.2" width="1" height="1" fill="#999"/><text transform="translate(58,439.3) rotate(-90)" x="0" y="0" text-anchor="middle" font-size="10" fill="#444" font-family="Liberation Sans">1</text><rect x="52" y="447.9" width="5" height="1" fill="#777"/><rect x="54" y="443.3" width="1" height="1" fill="#999"/><rect x="54" y="452.4" width="1" height="1" fill="#999"/><text transform="translate(58,457.5) rotate(-90)" x="0" y="0" text-anchor="middle" font-size="10" fill="#444" font-family="Liberation Sans">0</text><rect x="52" y="466.1" width="5" height="1" fill="#777"/><rect x="54" y="461.6" width="1" height="1" fill="#999"/><rect x="54" y="470.7" width="1" height="1" fill="#999"/><text transform="translate(58,475.7) rotate(-90)" x="0" y="0" text-anchor="middle" font-size="10" fill="#444" font-family="Liberation Sans">1</text><rect x="52" y="484.4" width="5" height="1" fill="#777"/><rect x="54" y="479.8" width="1" height="1" fill="#999"/><rect x="54" y="488.9" width="1" height="1" fill="#999"/><text transform="translate(58,494.0) rotate(-90)" x="0" y="0" text-anchor="middle" font-size="10" fill="#444" font-family="Liberation Sans">2</text><rect x="52" y="502.6" width="5" height="1" fill="#777"/><rect x="54" y="498.0" width="1" height="1" fill="#999"/><rect x="54" y="507.2" width="1" height="1" fill="#999"/><text transform="translate(58,512.2) rotate(-90)" x="0" y="0" text-anchor="middle" font-size="10" fill="#444" font-family="Liberation Sans">3</text><rect x="52" y="520.8" width="5" height="1" fill="#777"/><rect x="54" y="516.3" width="1" height="1" fill="#999"/><rect x="54" y="525.4" width="1" height="1" fill="#999"/><text transform="translate(58,530.5) rotate(-90)" x="0" y="0" text-anchor="middle" font-size="10" fill="#444" font-family="Liberation Sans">4</text><rect x="52" y="539.1" width="5" height="1" fill="#777"/><rect x="54" y="534.5" width="1" height="1" fill="#999"/><rect x="54" y="543.6" width="1" height="1" fill="#999"/><text transform="translate(58,548.7) rotate(-90)" x="0" y="0" text-anchor="middle" font-size="10" fill="#444" font-family="Liberation Sans">5</text><rect x="52" y="557.3" width="5" height="1" fill="#777"/><rect x="54" y="552.8" width="1" height="1" fill="#999"/><rect x="54" y="561.9" width="1" height="1" fill="#999"/><text transform="translate(58,566.9) rotate(-90)" x="0" y="0" text-anchor="middle" font-size="10" fill="#444" font-family="Liberation Sans">6</text><rect x="52" y="575.6" width="5" height="1" fill="#777"/><rect x="54" y="571.0" width="1" height="1" fill="#999"/><rect x="54" y="580.1" width="1" height="1" fill="#999"/><text transform="translate(58,585.2) rotate(-90)" x="0" y="0" text-anchor="middle" font-size="10" fill="#444" font-family="Liberation Sans">7</text><rect x="52" y="593.8" width="5" height="1" fill="#777"/><rect x="54" y="589.2" width="1" height="1" fill="#999"/><rect x="54" y="598.4" width="1" height="1" fill="#999"/><text transform="translate(58,603.4) rotate(-90)" x="0" y="0" text-anchor="middle" font-size="10" fill="#444" font-family="Liberation Sans">8</text><rect x="52" y="612.0" width="5" height="1" fill="#777"/><rect x="54" y="607.5" width="1" height="1" fill="#999"/><rect x="54" y="616.6" width="1" height="1" fill="#999"/><text transform="translate(58,621.7) rotate(-90)" x="0" y="0" text-anchor="middle" font-size="10" fill="#444" font-family="Liberation Sans">9</text><rect x="52" y="630.3" width="5" height="1" fill="#777"/><rect x="54" y="625.7" width="1" height="1" fill="#999"/><rect x="52" y="283.7" width="5" height="1" fill="#777"/><path d="M44 449.5 H62" stroke="#d04020" stroke-width="1" stroke-dasharray="1.5 1.5" opacity="0.7"/></svg>
<div class="a" style="left:1123px;top:256px;width:17px;height:312px;background:#dcdcdc"></div>
<div class="a" style="left:1123px;top:256px;width:17px;height:17px;background:#ffffff;border:1px solid #d0d0d0"></div>
<svg class="a" style="left:1126px;top:261px" width="11" height="6" viewBox="0 0 11 6"><path d="M0.5 5.5 L5.5 0.5 L10.5 5.5Z" fill="#6a6a6a"/></svg>
<div class="a" style="left:1123px;top:421px;width:17px;height:49px;background:#ffffff;border:1px solid #cfcfcf"></div>
<div class="a" style="left:1123px;top:569px;width:17px;height:17px;background:#ffffff;border:1px solid #d0d0d0"></div>
<svg class="a" style="left:1126px;top:574px" width="11" height="6" viewBox="0 0 11 6"><path d="M0.5 0.5 L5.5 5.5 L10.5 0.5Z" fill="#6a6a6a"/></svg>
<svg class="a" style="left:1126px;top:589px" width="11" height="11" viewBox="0 0 11 11"><path d="M0.5 5 L5.5 0.5 L10.5 5Z M0.5 10.5 L5.5 6 L10.5 10.5Z" fill="#6a6a6a"/></svg>
<svg class="a" style="left:1126px;top:607px" width="11" height="11" viewBox="0 0 11 11"><path d="M0.5 0.5 L5.5 5 L10.5 0.5Z M0.5 6 L5.5 10.5 L10.5 6Z" fill="#6a6a6a"/></svg>
<div class="a" style="left:285px;top:283px;width:620px;height:350px;background:#d8d8dc"></div>
<div class="a" style="left:286px;top:284px;width:618px;height:348px;overflow:hidden;background:#f5f6fc">
<div class="a" style="left:0;top:300px;width:618px;height:48px;background:linear-gradient(to bottom,rgba(245,246,252,0) 0%,rgba(200,240,185,.55) 35%,rgba(120,232,100,.9) 70%,#4de24a 100%)"></div>
<div class="a" style="left:0;top:290px;width:618px;height:58px;background:radial-gradient(ellipse 210px 42px at 618px 58px,rgba(246,246,60,1) 0%,rgba(246,246,60,.8) 50%,rgba(246,246,60,0) 100%)"></div>
</div>
<div class="a" style="left:43px;top:641px;width:1080px;height:1px;background:#cdcdcd"></div>
<div class="a" style="left:43px;top:642px;width:1080px;height:33px;background:#e6e6e6"></div>
<div class="a" style="left:1123px;top:644px;width:17px;height:16px;background:#ffffff;border:1px solid #d8d8d8"></div>
<svg class="a" style="left:1126px;top:649px" width="11" height="6" viewBox="0 0 11 6"><path d="M0.5 5.5 L5.5 0.5 L10.5 5.5Z" fill="#6a6a6a"/></svg>
<div class="a" style="left:1123px;top:660px;width:17px;height:15px;background:#ffffff;border:1px solid #d8d8d8"></div>
<svg class="a" style="left:1126px;top:664px" width="11" height="6" viewBox="0 0 11 6"><path d="M0.5 0.5 L5.5 5.5 L10.5 0.5Z" fill="#6a6a6a"/></svg>
<div class="a" style="left:43px;top:642px;width:1080px;height:33px;overflow:hidden"><div class="a w" style="left:22.0px;top:10.0px;font-size:30.21px;line-height:42px;color:#4a4a4a">Щелкните, чтобы добавить заметки</div></div>
<div class="a" style="left:0px;top:675px;width:1141px;height:23px;background:#f1f1f1"></div>
<div class="a" style="left:0px;top:675px;width:1141px;height:1px;background:#dcdcdc"></div>
<div class="a w" style="left:5.0px;top:679.0px;font-size:10.56px;line-height:16px;color:#3a3a3a">Слайд 4 из 6</div>
<svg class="a" style="left:82px;top:681px" width="13" height="12" viewBox="0 0 13 12"><path d="M0.5 1.5 H6 V11 H0.5Z M6 1.5 H9" fill="none" stroke="#666" stroke-width="0.9"/><path d="M7 9 L12 2.5" stroke="#666" stroke-width="1.4"/></svg>
<div class="a w" style="left:107.0px;top:679.0px;font-size:11.15px;line-height:17px;color:#3a3a3a">русский</div>
<svg class="a" style="left:662px;top:680px" width="12" height="12" viewBox="0 0 12 12"><path d="M4 3 L6 0.5 L8 3Z" fill="#666"/><path d="M0 5.5 H12 M0 8 H12 M0 10.5 H12" stroke="#777" stroke-width="0.9"/></svg>
<div class="a w" style="left:677.8px;top:679.0px;font-size:10.88px;line-height:17px;color:#3a3a3a">Заметки</div>
<svg class="a" style="left:734px;top:679px" width="14" height="13" viewBox="0 0 14 13"><path d="M0.5 0.5 H13.5 V9 H5 L2 12 V9 H0.5Z" fill="#555"/></svg>
<div class="a w" style="left:750.5px;top:679.0px;font-size:11.40px;line-height:17px;color:#3a3a3a">Примечания</div>
<div class="a" style="left:832px;top:676px;width:28px;height:22px;background:#c8c8c8"></div>
<svg class="a" style="left:840px;top:680px" width="12" height="12" viewBox="0 0 12 12"><rect x="0.5" y="0.5" width="11" height="11" fill="none" stroke="#555" stroke-width="1"/><path d="M3.5 0.5 V11.5 M3.5 8.5 H11.5" stroke="#555" stroke-width="1"/><rect x="5.5" y="2.5" width="4" height="4" fill="none" stroke="#555" stroke-width="0.8"/></svg>
<svg class="a" style="left:869px;top:680px" width="12" height="12" viewBox="0 0 12 12"><rect x="0.5" y="0.5" width="4.5" height="4.5" fill="none" stroke="#666" stroke-width="1"/><rect x="7" y="0.5" width="4.5" height="4.5" fill="none" stroke="#666" stroke-width="1"/><rect x="0.5" y="7" width="4.5" height="4.5" fill="none" stroke="#666" stroke-width="1"/><rect x="7" y="7" width="4.5" height="4.5" fill="none" stroke="#666" stroke-width="1"/></svg>
<svg class="a" style="left:898px;top:680px" width="13" height="12" viewBox="0 0 13 12"><path d="M0.5 1 H6 V11 H0.5Z M7 1 H12.5 V11 H7Z" fill="none" stroke="#666" stroke-width="1"/><path d="M2 3.5 H5 M2 5.5 H5 M2 7.5 H5 M8.5 3.5 H11 M8.5 5.5 H11" stroke="#888" stroke-width="0.7"/></svg>
<svg class="a" style="left:927px;top:680px" width="12" height="12" viewBox="0 0 12 12"><path d="M0 1 H12" stroke="#666" stroke-width="1"/><rect x="1.5" y="1.5" width="9" height="6" fill="none" stroke="#666" stroke-width="1"/><path d="M6 7.5 V10 M3.5 11 H8.5" stroke="#666" stroke-width="1"/></svg>
<div class="a" style="left:952px;top:684px;width:8px;height:2px;background:#555"></div>
<div class="a" style="left:964px;top:685px;width:103px;height:1px;background:#999"></div>
<div class="a" style="left:1014px;top:681px;width:1px;height:8px;background:#999"></div>
<div class="a" style="left:983px;top:679px;width:6px;height:13px;background:#6a6a6a"></div>
<svg class="a" style="left:1070px;top:680px" width="10" height="10" viewBox="0 0 10 10"><path d="M5 0 V10 M0 5 H10" stroke="#555" stroke-width="1.6"/></svg>
<div class="a w" style="left:1086.0px;top:679.0px;font-size:10.75px;line-height:16px;color:#3a3a3a;white-space:pre">47 %</div>
<svg class="a" style="left:1123px;top:680px" width="11" height="11" viewBox="0 0 11 11"><rect x="0.5" y="0.5" width="10" height="10" fill="none" stroke="#666" stroke-width="1"/><path d="M2.5 2.5 L4.5 4.5 M8.5 2.5 L6.5 4.5 M2.5 8.5 L4.5 6.5 M8.5 8.5 L6.5 6.5" stroke="#666" stroke-width="1"/></svg>
<svg class="a" style="left:280px;top:280px" width="630" height="360" viewBox="0 0 630 360"><defs><linearGradient id="bg" x1="0" y1="0" x2="0" y2="1"><stop offset="0" stop-color="#dcec18"/><stop offset="0.3" stop-color="#8ad422"/><stop offset="0.5" stop-color="#3cc83a"/><stop offset="0.75" stop-color="#2bbf98"/><stop offset="1" stop-color="#27b0da"/></linearGradient></defs><rect x="41.8" y="64.8" width="121.9" height="98.9" rx="6.5" fill="rgba(253,253,255,0.86)" stroke="url(#bg)" stroke-width="1.6"/><rect x="182.3" y="62.8" width="167.9" height="100.9" rx="6.5" fill="rgba(253,253,255,0.86)" stroke="url(#bg)" stroke-width="1.6"/><rect x="361.3" y="64.8" width="238.9" height="99.9" rx="6.5" fill="rgba(253,253,255,0.86)" stroke="url(#bg)" stroke-width="1.6"/><rect x="41.8" y="174.8" width="166.9" height="76.9" rx="6.5" fill="rgba(253,253,255,0.86)" stroke="url(#bg)" stroke-width="1.6"/><rect x="220.8" y="173.8" width="379.4" height="83.4" rx="6.5" fill="rgba(253,253,255,0.86)" stroke="url(#bg)" stroke-width="1.6"/><rect x="42.8" y="270.3" width="264.4" height="70.4" rx="6.5" fill="rgba(253,253,255,0.86)" stroke="url(#bg)" stroke-width="1.6"/><rect x="359.8" y="270.3" width="240.4" height="70.4" rx="6.5" fill="rgba(253,253,255,0.86)" stroke="url(#bg)" stroke-width="1.6"/></svg>
<div class="a w" style="left:499.2px;top:304.1px;font-size:18.20px;line-height:26px;color:#2b313c;font-weight:bold">Минимизация рисков</div>
<div class="a w" style="left:336.8px;top:359.9px;font-size:25.40px;line-height:36px;color:#2b313c;letter-spacing:1.03px">Анализ</div>
<div class="a w" style="left:346.3px;top:389.6px;font-size:25.40px;line-height:36px;color:#2b313c;letter-spacing:1.45px">риска</div>
<div class="a w" style="left:473.9px;top:374.8px;font-size:20.60px;line-height:29px;color:#2b313c;letter-spacing:0.92px">Контрагенты</div>
<div class="a w" style="left:654.2px;top:360.1px;font-size:20.50px;line-height:29px;color:#2b313c;letter-spacing:1.15px">Управление риском</div>
<div class="a w" style="left:334.4px;top:471.9px;font-size:24.70px;line-height:35px;color:#2b313c;letter-spacing:1.20px">Валидация</div>
<div class="a w" style="left:592.6px;top:457.8px;font-size:27.00px;line-height:38px;color:#2b313c;letter-spacing:1.91px">Актуализация</div>
<div class="a w" style="left:543.9px;top:496.0px;font-size:27.00px;line-height:38px;color:#2b313c;letter-spacing:1.93px">страховых программ</div>
<div class="a w" style="left:335.2px;top:579.6px;font-size:17.60px;line-height:25px;color:#2b313c;letter-spacing:1.20px">Корректировка процессов</div>
<div class="a w" style="left:651.0px;top:564.6px;font-size:21.80px;line-height:31px;color:#2b313c;letter-spacing:0.21px">Анализ инцидентов</div>
<div class="a w" style="left:883.0px;top:611.0px;font-size:8.00px;line-height:13px;color:#9a9a9a">4</div>
<svg class="a" style="left:660px;top:441px" width="22" height="28" viewBox="0 0 22 28"><path d="M9 1 L6.5 4 H8.3 V8 H4 V6.2 L1 8.7 L4 11.2 V9.4 H8.3 V13.5 H9.7 V9.4 H14 V11.2 L17 8.7 L14 6.2 V8 H9.7 V4 H11.5Z" fill="#111" stroke="#fff" stroke-width="0.6"/>
<path d="M9.5 9 V24 L13 20.5 L15.5 26.5 L17.5 25.5 L15 19.8 H20 Z" fill="#fff" stroke="#111" stroke-width="1"/></svg>
<!-- ============ ZOOM ============ -->
<div class="a" style="left:1141px;top:0px;width:359px;height:698px;background:#15161a"></div>
<div class="a" style="left:1147px;top:0px;width:349px;height:322px;background:#242424;border:1px solid #323232;border-radius:8px"></div>
<div class="a" style="left:1151px;top:2px;width:341px;height:44px;background:#1f2022"></div>
<div class="a w" style="left:1249.6px;top:15.7px;font-size:12.72px;line-height:19px;color:#f2f2f2;font-weight:bold">Участники (12)</div>
<svg class="a" style="left:1441px;top:17px" width="15" height="15" viewBox="0 0 15 15"><path d="M6 2.5 H3 Q1.5 2.5 1.5 4 V12 Q1.5 13.5 3 13.5 H11 Q12.5 13.5 12.5 12 V9" fill="none" stroke="#c8c8c8" stroke-width="1.6"/><path d="M7 8 L13.5 1.5 M9 1.5 H13.5 V6" fill="none" stroke="#c8c8c8" stroke-width="1.6"/></svg>
<svg class="a" style="left:1469px;top:19px" width="11" height="11" viewBox="0 0 11 11"><path d="M1 1 L10 10 M10 1 L1 10" stroke="#c8c8c8" stroke-width="1.4"/></svg>
<div class="a" style="left:1170px;top:56px;width:306px;height:31px;background:transparent;border:1px solid #5c5c5c;border-radius:8px"></div>
<svg class="a" style="left:1180px;top:66px" width="13" height="12" viewBox="0 0 13 12"><circle cx="5.5" cy="5.5" r="4.3" fill="none" stroke="#a8a8a8" stroke-width="1.3"/><path d="M8.7 8.7 L12 11.8" stroke="#a8a8a8" stroke-width="1.3"/></svg>
<div class="a w" style="left:1197.2px;top:63.0px;font-size:12.11px;line-height:18px;color:#a4a4a4">Найти участника</div>
<div class="a" style="left:1482px;top:90px;width:8px;height:175px;background:#efeff3;border-radius:4px"></div>
<div class="a" style="left:1482px;top:90px;width:8px;height:64px;background:#a9a9b1;border-radius:4px 4px 0 0"></div>
<div class="a w" style="left:1165.9px;top:100.0px;font-size:12.71px;line-height:19px;color:#f2f2f2;font-weight:bold">Зал ожидания (1)</div>
<svg class="a" style="left:1285px;top:107px" width="10" height="7" viewBox="0 0 10 7"><path d="M1 1 L5 5 L9 1" fill="none" stroke="#9a9a9a" stroke-width="1.3"/></svg>
<div class="a w" style="left:1395.3px;top:100.5px;font-size:12.50px;line-height:19px;color:#4fa0ff;font-weight:bold">Сообщение</div>
<div class="a" style="left:1167px;top:134px;width:28px;height:28px;border-radius:8px;overflow:hidden;background:linear-gradient(to bottom,#9aa3ad 0%,#b8bcc0 30%,#7b7b7b 55%,#9a9a9a 100%)"><div class="a" style="left:12px;top:4px;width:10px;height:10px;background:#6b5a4a;border-radius:2px"></div><div class="a" style="left:5px;top:12px;width:5px;height:16px;background:#222"></div></div>
<div class="a w" style="left:1205.8px;top:141.2px;font-size:11.88px;line-height:18px;color:#f2f2f2">Наталия Клюенкова</div>
<div class="a w" style="left:1165.9px;top:180.2px;font-size:12.69px;line-height:19px;color:#f2f2f2;font-weight:bold">Подключение выполнено (12)</div>
<svg class="a" style="left:1366px;top:186px" width="10" height="7" viewBox="0 0 10 7"><path d="M1 1 L5 5 L9 1" fill="none" stroke="#9a9a9a" stroke-width="1.3"/></svg>
<div class="a" style="left:1167px;top:213px;width:28px;height:28px;border-radius:8px;overflow:hidden;background:#fff"><div class="a" style="left:3px;top:2px;width:23px;height:25px;border:1.2px solid #d83a3a;border-top:2.5px solid #d83a3a"></div></div>
<svg class="a" style="left:1174px;top:218px" width="14" height="18" viewBox="0 0 14 18"><path d="M7 2 V14" stroke="#d83a3a" stroke-width="1.6"/><path d="M2 3 Q7 9 12 3" fill="none" stroke="#d83a3a" stroke-width="1.5"/><path d="M4 7 Q7 11 10 7 M4.5 11 Q7 8.5 9.5 11" fill="none" stroke="#d83a3a" stroke-width="1.2"/><path d="M3 15 H11 M3 16.5 H11" stroke="#e07070" stroke-width="0.8"/></svg>
<div class="a w" style="left:1205.8px;top:220.3px;font-size:12.20px;line-height:18px;color:#f2f2f2;letter-spacing:-0.30px">Алексей Гончар...</div>
<div class="a w" style="left:1310.3px;top:220.3px;font-size:11.97px;line-height:18px;color:#f2f2f2">(Организатор, я)</div>
<svg class="a" style="left:1407px;top:222px" width="12" height="12" viewBox="0 0 12 12"><circle cx="6" cy="6" r="5.5" fill="#c4c4c4"/><circle cx="6" cy="6" r="1.8" fill="#e0312e"/></svg>
<svg class="a" style="left:1429px;top:219px" width="16" height="16" viewBox="0 0 16 16"><rect x="5.5" y="1" width="5" height="9" rx="2.5" fill="none" stroke="#e35050" stroke-width="1.3"/><path d="M3 7 Q3 12 8 12 Q13 12 13 7 M8 12 V15 M5.5 15 H10.5" fill="none" stroke="#e35050" stroke-width="1.3"/><path d="M1 15.5 L15 0.5" stroke="#e35050" stroke-width="1.3"/></svg>
<svg class="a" style="left:1452px;top:222px" width="17" height="11" viewBox="0 0 17 11"><rect x="0.8" y="0.8" width="11" height="9.5" rx="2" fill="none" stroke="#a8a8a8" stroke-width="1.4"/><path d="M12 4 L16 1.5 V9.5 L12 7" fill="none" stroke="#a8a8a8" stroke-width="1.4"/></svg>
<div class="a" style="left:1151px;top:252px;width:330px;height:12px;overflow:hidden"><div class="a" style="left:16px;top:1px;width:28px;height:28px;border-radius:8px;overflow:hidden;background:#efe6d2"><div class="a" style="left:9px;top:1px;width:18px;height:12px;border-radius:6px 6px 0 0;background:#4a3a34"></div><div class="a" style="left:11px;top:5px;width:14px;height:8px;background:#d8b0a0"></div></div><div class="a" style="left:254px;top:10px;width:16px;height:10px;border-radius:4px;background:#3fbf4f"></div><div class="a" style="left:283px;top:6px;width:5px;height:10px;border-radius:2.5px;border:1.3px solid #a8a8a8"></div><div class="a" style="left:301px;top:10px;width:14px;height:10px;border-radius:2px;border:1.4px solid #a8a8a8"></div></div>
<div class="a" style="left:1169px;top:281px;width:87px;height:23px;background:transparent;border:1px solid #6a6a6a;border-radius:7px"></div>
<div class="a w" style="left:1180.2px;top:284.1px;font-size:11.82px;line-height:18px;color:#f2f2f2">Пригласить</div>
<div class="a" style="left:1273px;top:281px;width:163px;height:23px;background:transparent;border:1px solid #6a6a6a;border-radius:7px"></div>
<div class="a w" style="left:1283.7px;top:284.1px;font-size:12.00px;line-height:18px;color:#f2f2f2">Выключить звук для всех</div>
<div class="a" style="left:1453px;top:281px;width:23px;height:23px;background:transparent;border:1px solid #6a6a6a;border-radius:7px"></div>
<svg class="a" style="left:1458px;top:291px" width="12" height="3" viewBox="0 0 12 3"><circle cx="1.5" cy="1.5" r="1.2" fill="#ddd"/><circle cx="6" cy="1.5" r="1.2" fill="#ddd"/><circle cx="10.5" cy="1.5" r="1.2" fill="#ddd"/></svg>
<div class="a" style="left:1147px;top:326px;width:349px;height:380px;background:#242424;border:1px solid #323232;border-radius:8px"></div>
<div class="a" style="left:1151px;top:330px;width:341px;height:43px;background:#1f2022"></div>
<div class="a w" style="left:1160.1px;top:343.1px;font-size:12.36px;line-height:19px;color:#f2f2f2;font-weight:bold">Программа развития бизнеса для имп...</div>
<svg class="a" style="left:1416px;top:349px" width="13" height="4" viewBox="0 0 13 4"><circle cx="1.5" cy="2" r="1.4" fill="#bbb"/><circle cx="6.5" cy="2" r="1.4" fill="#bbb"/><circle cx="11.5" cy="2" r="1.4" fill="#bbb"/></svg>
<svg class="a" style="left:1441px;top:344px" width="15" height="15" viewBox="0 0 15 15"><path d="M6 2.5 H3 Q1.5 2.5 1.5 4 V12 Q1.5 13.5 3 13.5 H11 Q12.5 13.5 12.5 12 V9" fill="none" stroke="#c8c8c8" stroke-width="1.6"/><path d="M7 8 L13.5 1.5 M9 1.5 H13.5 V6" fill="none" stroke="#c8c8c8" stroke-width="1.6"/></svg>
<svg class="a" style="left:1469px;top:346px" width="11" height="11" viewBox="0 0 11 11"><path d="M1 1 L10 10 M10 1 L1 10" stroke="#c8c8c8" stroke-width="1.4"/></svg>
<div class="a" style="left:1159px;top:379px;width:43px;height:42px;background:transparent;border:2.5px solid #0e72ed;border-radius:12px"></div>
<svg class="a" style="left:1170px;top:391px" width="20" height="17" viewBox="0 0 20 17"><circle cx="6" cy="2.8" r="2.4" fill="#2f8cff"/><circle cx="14" cy="2.8" r="2.4" fill="#2f8cff"/><circle cx="10" cy="6.8" r="2.6" fill="#2f8cff"/><path d="M1.5 10.5 Q1.5 7 5 6.5 Q7 6.5 7.5 8 L6 11Z M18.5 10.5 Q18.5 7 15 6.5 Q13 6.5 12.5 8 L14 11Z" fill="#2f8cff"/><path d="M4.5 14.5 Q4.5 10 10 10 Q15.5 10 15.5 14.5 Q15.5 16.5 13 16.5 H7 Q4.5 16.5 4.5 14.5Z" fill="#2f8cff"/></svg>
<div class="a" style="left:1213px;top:385px;width:1px;height:34px;background:#4a4a4a"></div>
<div class="a" style="left:1223px;top:379px;width:43px;height:42px;background:transparent;border:1.2px solid #5a5a5a;border-radius:12px"></div>
<svg class="a" style="left:1237px;top:393px" width="14" height="14" viewBox="0 0 14 14"><path d="M7 0.5 V13.5 M0.5 7 H13.5" stroke="#2f8cff" stroke-width="1.8"/></svg>
<div class="a w" style="left:1170.8px;top:424.0px;font-size:10.60px;line-height:16px;color:#4fa0ff;font-weight:bold">Все</div>
<div class="a w" style="left:1218.1px;top:424.0px;font-size:10.84px;line-height:17px;color:#a0a0a0">Новый чат</div>
<div class="a" style="left:1151px;top:443px;width:341px;height:165px;background:#18181a"></div>
<div class="a" style="left:1151px;top:443px;width:341px;height:1px;background:#3a3a3a"></div>
<div class="a" style="left:1151px;top:444px;width:341px;height:12px;overflow:hidden"><div class="a w" style="left:117.2px;top:-3.2px;font-size:10.71px;line-height:16px;color:#a0a0a0">коллективного чата</div></div>
<div class="a" style="left:1482px;top:445px;width:8px;height:160px;background:#efeff3;border-radius:4px"></div>
<div class="a" style="left:1482px;top:569px;width:8px;height:39px;background:#8a8a90;border-radius:0 0 4px 4px"></div>
<div class="a w" style="left:1199.8px;top:465.6px;font-size:12.32px;line-height:19px;color:#4f9dff">Anton</div>
<div class="a w" style="left:1237.2px;top:467.6px;font-size:10.43px;line-height:16px;color:#a8a8a8">10:37</div>
<div class="a" style="left:1164px;top:485px;width:23px;height:23px;background:#2ea54e;border-radius:8px"></div>
<div class="a w" style="left:1170.0px;top:487.0px;font-size:15.00px;line-height:22px;color:#ffffff">A</div>
<div class="a" style="left:1194px;top:484px;width:240px;height:96px;background:#323232;border-radius:12px"></div>
<div class="a w" style="left:1204.0px;top:490.5px;font-size:14.74px;line-height:22px;color:#f0f0f0">Добрый день!</div>
<div class="a w" style="left:1204.0px;top:510.2px;font-size:14.74px;line-height:22px;color:#f0f0f0">Подскажите, как сейчас</div>
<div class="a w" style="left:1204.0px;top:529.6px;font-size:14.74px;line-height:22px;color:#f0f0f0">проходят платежи из России в</div>
<div class="a w" style="left:1204.0px;top:548.9px;font-size:14.74px;line-height:22px;color:#f0f0f0">ОАЭ?</div>
<svg class="a" style="left:1200px;top:587px" width="18" height="15" viewBox="0 0 18 15"><path d="M9 3 H3.5 Q1 3 1 5.5 V8.5 Q1 11 3.5 11 H4.5 V13.8 L7.5 11 H11 Q13.5 11 13.5 8.5 V7.5" fill="none" stroke="#b8b8b8" stroke-width="1.2" stroke-linejoin="round"/><path d="M13 0.5 V6 M10.2 3.2 H15.8" stroke="#b8b8b8" stroke-width="1.3"/></svg>
<svg class="a" style="left:1224px;top:587px" width="18" height="15" viewBox="0 0 18 15"><path d="M11 3 A6 6 0 1 0 13.5 8" fill="none" stroke="#b8b8b8" stroke-width="1.3"/><circle cx="5" cy="7" r="0.9" fill="#b8b8b8"/><circle cx="8.5" cy="7" r="0.9" fill="#b8b8b8"/><path d="M4 10 Q7 12.5 10 10" fill="none" stroke="#b8b8b8" stroke-width="1.2"/><path d="M14 0.5 V6 M11.2 3.2 H16.8" stroke="#b8b8b8" stroke-width="1.3"/></svg>
<svg class="a" style="left:1250px;top:594px" width="12" height="3" viewBox="0 0 12 3"><circle cx="1.5" cy="1.5" r="1.1" fill="#b8b8b8"/><circle cx="6" cy="1.5" r="1.1" fill="#b8b8b8"/><circle cx="10.5" cy="1.5" r="1.1" fill="#b8b8b8"/></svg>
<div class="a" style="left:1151px;top:607px;width:341px;height:25px;background:#2a2a2b"></div>
<svg class="a" style="left:1165px;top:611px" width="15" height="16" viewBox="0 0 15 16"><circle cx="6" cy="4.5" r="3.3" fill="none" stroke="#a8a8a8" stroke-width="1.2"/><path d="M1 14 Q1 9.5 6 9.5 Q8 9.5 9 10.2" fill="none" stroke="#a8a8a8" stroke-width="1.2"/><path d="M10.5 8.5 L14.5 10 V12.5 Q14.5 15 10.5 16 Q6.5 15 6.5 12.5 V10Z" fill="#4f9dff"/></svg>
<div class="a w" style="left:1183.1px;top:611.2px;font-size:11.76px;line-height:18px;color:#a8a8a8">Кто может видеть ваши сообщения? Запись включена</div>
<div class="a" style="left:1151px;top:632px;width:341px;height:66px;background:#18181a"></div>
<div class="a w" style="left:1163.4px;top:648.7px;font-size:11.59px;line-height:18px;color:#f0f0f0">Кому:</div>
<div class="a" style="left:1202px;top:645px;width:172px;height:23px;background:#0e72ed;border-radius:5px"></div>
<div class="a w" style="left:1210.2px;top:649.0px;font-size:10.92px;line-height:17px;color:#ffffff">Групповой чат конференции</div>
<svg class="a" style="left:1358px;top:655px" width="8" height="5" viewBox="0 0 8 5"><path d="M0.8 0.8 L4 4 L7.2 0.8" fill="none" stroke="#fff" stroke-width="1.4"/></svg>
<div class="a w" style="left:1159.4px;top:673.2px;font-size:14.67px;line-height:22px;color:#8a8a8a">Сообщение все</div>
</body></html>
